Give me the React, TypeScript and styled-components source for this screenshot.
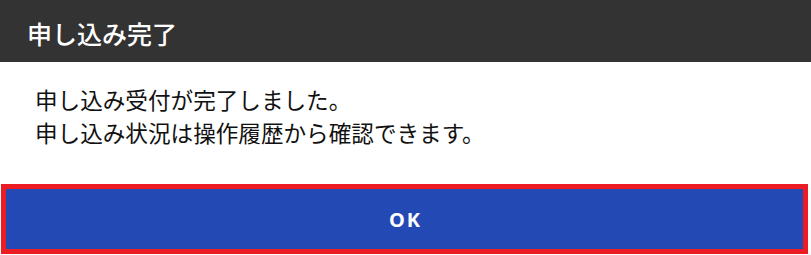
import React from 'react'
import styled, { createGlobalStyle } from 'styled-components'

const GlobalStyle = createGlobalStyle`
  html, body {
    margin: 0;
    padding: 0;
    background: #ffffff;
  }
  body {
    font-family: "Noto Sans CJK JP", "Noto Sans", sans-serif;
  }
`

const App = () => {
  return (
    <>
      <GlobalStyle />
      <Dialog>
        <Header>
          <Title>申し込み完了</Title>
        </Header>
        <Body>
          <Message>申し込み受付が完了しました。</Message>
          <Message>申し込み状況は操作履歴から確認できます。</Message>
        </Body>
        <Footer>
          <OkButton type="button">OK</OkButton>
        </Footer>
      </Dialog>
    </>
  )
}

export default App

const Dialog = styled.div`
  width: 811px;
  height: 255px;
  display: flex;
  flex-direction: column;
  background: #ffffff;
`

const Header = styled.div`
  height: 62px;
  background: #333333;
  display: flex;
  align-items: center;
  padding: 4px 27px 0;
  box-sizing: border-box;
`

const Title = styled.h1`
  margin: 0;
  font-size: 25px;
  font-weight: 500;
  color: #ffffff;
  line-height: 1;
`

const Body = styled.div`
  padding: 21px 35px 0;
  flex: 1;
`

const Message = styled.p`
  margin: 0;
  font-size: 22.6px;
  line-height: 33px;
  color: #111111;
`

const Footer = styled.div`
  padding: 0 3px 1px 1px;
`

const OkButton = styled.button`
  width: 100%;
  height: 70px;
  box-sizing: border-box;
  border: 5px solid #ec1c24;
  background: #2349b5;
  color: #ffffff;
  font-family: "Noto Sans", "Noto Sans CJK JP", sans-serif;
  font-weight: 700;
  font-size: 20px;
  letter-spacing: 2px;
  cursor: pointer;
  padding: 0 0 0 2px;
`
